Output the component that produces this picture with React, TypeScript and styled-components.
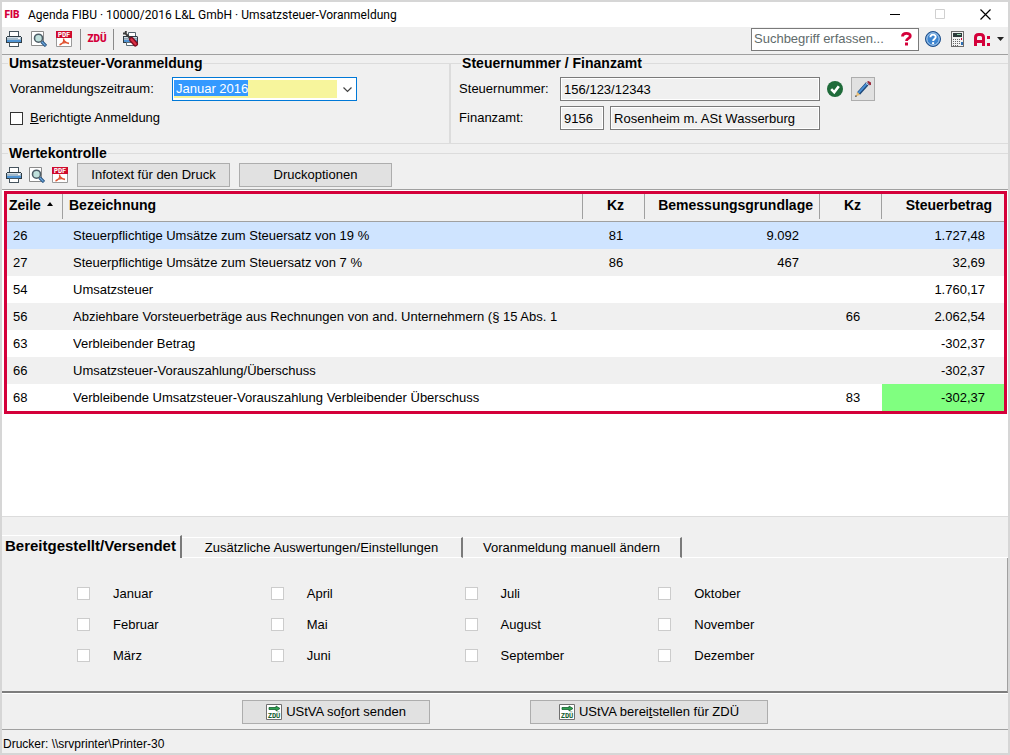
import React from "react";
import styled, { createGlobalStyle, css } from "styled-components";

const face = "#f0f0f0";
const line = "#dcdcdc";
const mid = "#a0a0a0";
const red = "#d4003a";

const GlobalStyle = createGlobalStyle`
  *, *::before, *::after { box-sizing: border-box; }
  body { margin: 0; background: ${face}; }
  body, button, input, select {
    font-family: "Liberation Sans", Arial, sans-serif;
    font-size: 13px;
    line-height: 16px;
    color: #000;
  }
`;

const Window = styled.div`
  display: flex;
  flex-direction: column;
  min-height: 100vh;
  border: 2px solid #d6d6d6;
  background: ${face};
`;

/* ---------- title bar ---------- */
const TitleBar = styled.header`
  display: flex;
  align-items: center;
  height: 25px;
  padding: 0 17px 0 2px;
  gap: 8px;
  background: #fff;
`;
const Mark = styled.span`
  display: flex;
  justify-content: center;
  width: 16px;
  font-family: Roboto, "Liberation Sans", sans-serif;
  font-size: 10px;
  font-weight: 900;
  color: ${red};
`;
const Title = styled.h1`
  flex: 1;
  margin: 0;
  font: 400 12px/16px Roboto, "Open Sans", sans-serif;
`;
const WindowButtons = styled.div`
  display: flex;
  gap: 35px;
`;
const PlainButton = styled.button`
  display: flex;
  align-items: center;
  justify-content: center;
  padding: 0;
  border: 0;
  background: none;
`;

/* ---------- toolbar ---------- */
const Toolbar = styled.div`
  display: flex;
  align-items: center;
  height: 28px;
  padding: 0 4px 3px;
  border-bottom: 1px solid ${mid};
`;
const ToolGroup = styled.div<{ $gap: number }>`
  display: flex;
  align-items: center;
  gap: ${(p) => p.$gap}px;
`;
const Separator = styled.span`
  width: 1px;
  height: 21px;
  margin: 0 8px;
  background: #8a8a8a;
`;
const SearchBox = styled.div`
  display: flex;
  align-items: center;
  width: 168px;
  height: 23px;
  margin: 0 6px 0 auto;
  padding: 0 6px 0 2px;
  border: 1px solid #7a7a7a;
  background: #fff;
`;
const SearchInput = styled.input`
  flex: 1;
  min-width: 0;
  padding: 0;
  border: 0;
  outline: 0;
  background: none;
  &::placeholder { color: #5f6b6b; opacity: 1; }
`;

/* ---------- group boxes ---------- */
const Groups = styled.div`
  display: grid;
  grid-template-columns: 25fr 31fr;
`;
const Group = styled.fieldset<{ $divider?: boolean; $open?: boolean }>`
  min-width: 0;
  margin: 0;
  padding: 5px 8px 13px;
  border: 0 solid ${line};
  border-width: 1px ${(p) => (p.$divider ? 2 : 0)}px 1px 0;
  ${(p) => p.$open && css`
    margin-top: 1px;
    padding: 1px 4px 2px;
    border-bottom: 0;
  `}
`;
const GroupTitle = styled.legend<{ $indent: number }>`
  margin-left: ${(p) => p.$indent}px;
  padding: 0 1px;
  font-size: 14px;
  font-weight: 700;
  line-height: 17px;
`;
const Rows = styled.div`
  display: flex;
  flex-direction: column;
  gap: 5px;
`;
const Row = styled.div`
  display: flex;
  align-items: center;
  height: 24px;
`;
const FieldLabel = styled.label<{ $width: number }>`
  flex: none;
  width: ${(p) => p.$width}px;
`;
const Combo = styled.div`
  position: relative;
  width: 185px;
  height: 24px;
  padding: 2px 1px;
  border: 1px solid #0078d7;
  background: #fff;
`;
const ComboSelect = styled.select`
  display: block;
  width: 100%;
  height: 18px;
  padding: 0 0 1px 2px;
  border: 0;
  outline: 0;
  appearance: none;
  color: #fff;
  background:
    linear-gradient(#3399ff, #3399ff) 0 0 / 74px 16px no-repeat,
    linear-gradient(#f7f59c, #f7f59c) 0 0 / calc(100% - 18px) 100% no-repeat,
    #fff;
  option { color: #000; }
`;
const ComboArrow = styled.svg`
  position: absolute;
  top: 9px;
  right: 4px;
  pointer-events: none;
`;
const CheckLabel = styled.label`
  display: flex;
  align-items: center;
  gap: 7px;
`;
const CheckBox = styled.input<{ $dim?: boolean }>`
  appearance: none;
  flex: none;
  width: 13px;
  height: 13px;
  margin: 0;
  border: 1px solid ${(p) => (p.$dim ? "#cccccc" : "#333")};
  background: #fff;
`;
const ReadField = styled.input<{ $width: number }>`
  width: ${(p) => p.$width}px;
  height: 24px;
  padding: 0 3px;
  border: 1px solid #7a7a7a;
  outline: 0;
  background: ${face};
  box-shadow: inset 0 0 0 1px #fff;
`;
const FieldPair = styled.div`
  display: flex;
  gap: 6px;
`;
const PushButton = styled.button<{ $width: number }>`
  display: flex;
  align-items: center;
  justify-content: center;
  gap: 4px;
  width: ${(p) => p.$width}px;
  height: 24px;
  padding: 0;
  border: 1px solid #adadad;
  background: #e1e1e1;
`;
const FieldTools = styled.div`
  display: flex;
  align-items: center;
  gap: 8px;
  margin-left: 7px;
`;
const ValueBar = styled.div`
  display: flex;
  align-items: center;
  gap: 9px;
`;

/* ---------- table ---------- */
const ListArea = styled.main`
  flex: 1;
  padding: 1px 1px 4px 2px;
  border-top: 1px solid ${mid};
  border-bottom: 1px solid ${line};
  background: #fff;
`;
const Frame = styled.div`
  border: 3px solid ${red};
`;
const Table = styled.table`
  width: 100%;
  table-layout: fixed;
  border-collapse: separate;
  border-spacing: 0;
`;
const Head = styled.th<{ $align?: string; $left?: number; $right?: number; $last?: boolean }>`
  height: 28px;
  padding: 0 0 2px;
  border-bottom: 1px solid ${mid};
  background: ${face};
  font-size: 14px;
  line-height: 23px;
  > span {
    display: block;
    height: 25px;
    padding: 0 ${(p) => p.$right ?? 6}px 0 ${(p) => p.$left ?? 6}px;
    border-right: ${(p) => (p.$last ? 0 : 1)}px solid ${mid};
    text-align: ${(p) => p.$align ?? "left"};
    white-space: nowrap;
  }
`;
const SortMark = styled.svg`
  margin-left: 6px;
  vertical-align: 4px;
`;
const BodyRow = styled.tr<{ $tone: "selected" | "odd" | "even" }>`
  background: ${(p) => ({ selected: "#cfe4ff", odd: "#f0f0f0", even: "#fff" })[p.$tone]};
`;
const Cell = styled.td<{ $align?: string; $left?: number; $right?: number; $mark?: boolean }>`
  height: 27px;
  padding: 0 ${(p) => p.$right ?? 0}px 0 ${(p) => p.$left ?? 0}px;
  text-align: ${(p) => p.$align ?? "left"};
  white-space: nowrap;
  ${(p) => p.$mark && css`background: #80ff80;`}
`;
const Clip = styled.span`
  display: block;
  overflow: hidden;
`;

/* ---------- tabs ---------- */
const TabList = styled.div`
  display: flex;
  align-items: flex-end;
  padding-top: 18px;
`;
const Tab = styled.button<{ $active?: boolean; $width: number }>`
  width: ${(p) => p.$width}px;
  height: ${(p) => (p.$active ? 23 : 21)}px;
  padding: 0;
  border: 0;
  border-top: 1px solid #fff;
  border-right: 2px solid #7a7a7a;
  background: ${face};
  ${(p) => p.$active
    ? css`
        padding: 0 0 3px 3px;
        font-size: 15px;
        font-weight: 700;
        text-align: left;
        white-space: nowrap;
      `
    : css`
        border-bottom: 1px solid #fff;
      `}
`;
const TabRest = styled.span`
  flex: 1;
  border-bottom: 1px solid #fff;
`;
const TabPanel = styled.section`
  padding: 20px 155px 20px 75px;
  border-right: 1px solid ${mid};
  border-bottom: 2px solid #7d7d7d;
`;
const Months = styled.div`
  display: grid;
  grid-template-columns: repeat(4, 1fr);
  grid-template-rows: repeat(3, 31px);
  grid-auto-flow: column;
`;
const MonthLabel = styled.label`
  display: flex;
  align-items: center;
  gap: 23px;
`;

/* ---------- footer ---------- */
const Actions = styled.div`
  display: flex;
  justify-content: center;
  gap: 100px;
  padding: 6px 0 5px;
  border-top: 1px solid #fff;
`;
const StatusBar = styled.footer`
  padding: 6px 1px 1px;
  border-top: 1px solid ${mid};
  font-size: 12px;
`;

/* ---------- icons ---------- */
const PrinterIcon = () => (
  <svg width="16" height="16" viewBox="0 0 16 16" shapeRendering="crispEdges" aria-hidden="true">
    <path d="M3 0h10v6H3z" fill="#46545e" />
    <path d="M4 1h8v4H4z" fill="#fff" />
    <path d="M1 5h14v1h1v6H0V6h1z" fill="#2f3d46" />
    <path d="M1 6h14v1H1z" fill="#d3dee6" />
    <path d="M1 7h14v2H1z" fill="#a3bacb" />
    <path d="M1 9h14v2H1z" fill="#4f94d4" />
    <path d="M12 7h2v1h-2z" fill="#fff" />
    <path d="M3 11h10v5H3z" fill="#46545e" />
    <path d="M4 12h8v3H4z" fill="#fff" />
  </svg>
);
const PreviewIcon = () => (
  <svg width="16" height="16" viewBox="0 0 16 16" aria-hidden="true">
    <path d="M.5.5h12v14H.5z" fill="#fff" stroke="#8b8b8b" />
    <path d="M10.500 10.500l4.500 4.500" stroke="#234f7d" strokeWidth="3.200" />
    <path d="M10.500 10.500l4 4" stroke="#6fa8dc" strokeWidth="1.200" />
    <circle cx="7.500" cy="7.200" r="4" fill="#bfe0dc" stroke="#4d5c66" strokeWidth="1.600" />
  </svg>
);
const PdfIcon = () => (
  <svg width="16" height="16" viewBox="0 0 16 16" aria-hidden="true">
    <path d="M.5.5h15v15H.5z" fill="#fff" stroke="#9a9a9a" />
    <path d="M0 0h16v7H0z" fill="#cf0a2c" />
    <text x="8" y="6" textAnchor="middle" fontSize="7" fontWeight="700" fontFamily="DejaVu Sans Mono, monospace" fill="#fff">PDF</text>
    <path d="M7.500 7.500c1 3-1.500 5.500-4 6.500M7.500 8c.5 2.500 3 4 5.500 4.500M4 13.500c2-1.800 5-2.200 8.500-1.500" fill="none" stroke="#e0512f" strokeWidth="1.400" />
  </svg>
);
const PrinterSetupIcon = () => (
  <svg width="18" height="16" viewBox="0 0 18 16" aria-hidden="true">
    <path d="M6.500 6V1.500h7V6" fill="#fff" stroke="#55636d" />
    <path d="M1 5h14l1 1v6H1z" fill="#2f3d46" />
    <path d="M2 6h13v1.500H2z" fill="#d3dee6" />
    <path d="M2 7.500h13V9H2z" fill="#a3bacb" />
    <path d="M2 9h13v2H2z" fill="#4f94d4" />
    <path d="M4.500 11.500h8v3h-8z" fill="#fff" stroke="#5a6a75" />
    <path d="M1 2.500h2.500L4 0M4 3l5 5" fill="none" stroke="#3c3c3c" strokeWidth="2" />
    <path d="M9.500 8.500l4 4.500" stroke="#7b0b1e" strokeWidth="5" strokeLinecap="round" />
    <path d="M9.500 8.500l4 4.500" stroke="#dc2f45" strokeWidth="2.400" strokeLinecap="round" />
  </svg>
);
const HelpIcon = () => (
  <svg width="16" height="16" viewBox="0 0 16 16" aria-hidden="true">
    <circle cx="8" cy="8" r="7.500" fill="#2b6cb4" stroke="#1f4f8a" />
    <circle cx="8" cy="8" r="6.200" fill="#3d85d0" stroke="#b9d6f2" strokeWidth="1" />
    <path d="M5.400 6.200c0-3.400 5.300-3.400 5.300-.2 0 1.900-2.600 2-2.600 4" fill="none" stroke="#fff" strokeWidth="1.900" />
    <path d="M7.100 11.200h2v1.900h-2z" fill="#fff" />
  </svg>
);
const CalculatorIcon = () => (
  <svg width="13" height="16" viewBox="0 0 13 16" shapeRendering="crispEdges" aria-hidden="true">
    <path d="M.5.5h12v15H.5z" fill="#f2f2f2" stroke="#6b6b6b" />
    <path d="M2 2h9v4H2z" fill="#2c3a3a" />
    <path d="M6 3h4v1H6z" fill="#8fd0a8" />
    {[8, 10, 12].map((y) => [2, 4, 6, 8].map((x) => <rect key={`${x}-${y}`} x={x} y={y} width="1" height="1" fill="#666" />))}
    <path d="M10 7h1v2h-1z" fill={red} />
    <path d="M10 11h2v3h-2z" fill="#2f6fb5" />
    <path d="M2 14h1v1H2zM4 14h1v1H4zM6 14h1v1H6z" fill="#666" />
  </svg>
);
const AgendaIcon = () => (
  <svg width="17" height="13" viewBox="0 0 17 13" aria-hidden="true">
    <path d="M1.500 13V4.500q0-3 3-3h2q3 0 3 3V13M1.500 8.500h8" fill="none" stroke={red} strokeWidth="3" />
    <path d="M13 3h3v3h-3zM13 10h3v3h-3z" fill={red} />
  </svg>
);
const QuestionIcon = () => (
  <svg width="11" height="14" viewBox="0 0 11 14" aria-hidden="true">
    <path d="M1.500 4.500c0-4 7.800-4 7.800-.6 0 2.600-3.800 2.300-3.800 5.100" fill="none" stroke={red} strokeWidth="2.800" />
    <path d="M4 10.500h3V13.500H4z" fill={red} />
  </svg>
);
const OkIcon = () => (
  <svg width="16" height="16" viewBox="0 0 16 16" role="img" aria-label="Gültig">
    <circle cx="8" cy="8" r="8" fill="#1f6b3a" />
    <path d="M4.200 8.200l3 3 4.600-6" fill="none" stroke="#fff" strokeWidth="2.600" />
  </svg>
);
const PencilIcon = () => (
  <svg width="16" height="16" viewBox="0 0 16 16" aria-hidden="true">
    <path d="M3.500 12.500l9-10" stroke="#1d4675" strokeWidth="4" />
    <path d="M3.300 12.200l9-10" stroke="#4a90d6" strokeWidth="2" />
    <path d="M12 .800l1.500-.8L16 1.500v1.800l-1.200 1.300z" fill="#9b2a3c" />
    <path d="M11 2l3 3" stroke="#c9ccd0" strokeWidth="1" />
    <path d="M1 15.500l1-4.500 3.200 2.700z" fill="#e9bd72" />
    <path d="M0 16l.8-2 1.300 1.200z" fill="#333" />
  </svg>
);
const SendIcon = () => (
  <svg width="16" height="16" viewBox="0 0 16 16" aria-hidden="true">
    <path d="M.5.5h15v15H.5z" fill="#fff" stroke="#6f6f6f" />
    <path d="M3 3.500h7V2l4 2.500L10 7V5.500H3z" fill="#2fa050" stroke="#14602f" strokeWidth=".8" />
    <text x="8" y="14" textAnchor="middle" fontSize="7" fontWeight="700" fontFamily="DejaVu Sans Mono, monospace" fill="#14602f">ZDÜ</text>
  </svg>
);
const RightTools = styled.div`
  display: flex;
  align-items: center;
  gap: 10px;
`;

type Line = { zeile: string; text: string; kz1?: string; basis?: string; kz2?: string; betrag: string };
const lines: Line[] = [
  { zeile: "26", text: "Steuerpflichtige Umsätze zum Steuersatz von 19 %", kz1: "81", basis: "9.092", betrag: "1.727,48" },
  { zeile: "27", text: "Steuerpflichtige Umsätze zum Steuersatz von 7 %", kz1: "86", basis: "467", betrag: "32,69" },
  { zeile: "54", text: "Umsatzsteuer", betrag: "1.760,17" },
  { zeile: "56", text: "Abziehbare Vorsteuerbeträge aus Rechnungen von and. Unternehmern (§ 15 Abs. 1", kz2: "66", betrag: "2.062,54" },
  { zeile: "63", text: "Verbleibender Betrag", betrag: "-302,37" },
  { zeile: "66", text: "Umsatzsteuer-Vorauszahlung/Überschuss", betrag: "-302,37" },
  { zeile: "68", text: "Verbleibende Umsatzsteuer-Vorauszahlung Verbleibender Überschuss", kz2: "83", betrag: "-302,37" },
];
const months = ["Januar", "Februar", "März", "April", "Mai", "Juni", "Juli", "August", "September", "Oktober", "November", "Dezember"];

export default function App() {
  return (
    <>
      <GlobalStyle />
      <Window>
        <TitleBar>
          <Mark>FIB</Mark>
          <Title>Agenda FIBU · 10000/2016 L&amp;L GmbH · Umsatzsteuer-Voranmeldung</Title>
          <WindowButtons>
            <PlainButton aria-label="Minimieren">
              <svg width="10" height="11"><path d="M0 5.500h10" stroke="#000" /></svg>
            </PlainButton>
            <PlainButton aria-label="Maximieren" disabled>
              <svg width="10" height="11"><path d="M.5.5h9v9h-9z" fill="none" stroke="#d0d0d0" /></svg>
            </PlainButton>
            <PlainButton aria-label="Schließen">
              <svg width="11" height="11"><path d="M.5.5l10 10M10.500.5l-10 10" stroke="#000" strokeWidth="1.200" /></svg>
            </PlainButton>
          </WindowButtons>
        </TitleBar>

        <Toolbar>
          <ToolGroup $gap={9}>
            <PlainButton aria-label="Drucken"><PrinterIcon /></PlainButton>
            <PlainButton aria-label="Vorschau"><PreviewIcon /></PlainButton>
            <PlainButton aria-label="PDF erstellen"><PdfIcon /></PlainButton>
          </ToolGroup>
          <Separator />
          <PlainButton><Mark>ZDÜ</Mark></PlainButton>
          <Separator />
          <PlainButton aria-label="Druckereinstellungen"><PrinterSetupIcon /></PlainButton>
          <SearchBox>
            <SearchInput type="text" aria-label="Suchbegriff" placeholder="Suchbegriff erfassen..." />
            <PlainButton aria-label="Suche"><QuestionIcon /></PlainButton>
          </SearchBox>
          <RightTools>
            <PlainButton aria-label="Hilfe"><HelpIcon /></PlainButton>
            <PlainButton aria-label="Rechner"><CalculatorIcon /></PlainButton>
            <ToolGroup $gap={6}>
              <PlainButton aria-label="Agenda"><AgendaIcon /></PlainButton>
              <PlainButton aria-label="Weitere">
                <svg width="7" height="4"><path d="M0 0h7L3.500 4z" fill="#222" /></svg>
              </PlainButton>
            </ToolGroup>
          </RightTools>
        </Toolbar>

        <Groups>
          <Group $divider>
            <GroupTitle $indent={-2}>Umsatzsteuer-Voranmeldung</GroupTitle>
            <Rows>
              <Row>
                <FieldLabel $width={162} htmlFor="zeitraum">Voranmeldungszeitraum:</FieldLabel>
                <Combo>
                  <ComboSelect id="zeitraum" defaultValue="Januar 2016">
                    {months.map((m) => <option key={m}>{m} 2016</option>)}
                  </ComboSelect>
                  <ComboArrow width="9" height="6"><path d="M.5.5l4 4 4-4" fill="none" stroke="#444" strokeWidth="1.200" /></ComboArrow>
                </Combo>
              </Row>
              <Row>
                <CheckLabel>
                  <CheckBox type="checkbox" />
                  <span><u>B</u>erichtigte Anmeldung</span>
                </CheckLabel>
              </Row>
            </Rows>
          </Group>
          <Group>
            <GroupTitle $indent={2}>Steuernummer / Finanzamt</GroupTitle>
            <Rows>
              <Row>
                <FieldLabel $width={101} htmlFor="steuernummer">Steuernummer:</FieldLabel>
                <ReadField id="steuernummer" $width={260} readOnly value="156/123/12343" />
                <FieldTools>
                  <OkIcon />
                  <PushButton $width={24} aria-label="Bearbeiten"><PencilIcon /></PushButton>
                </FieldTools>
              </Row>
              <Row>
                <FieldLabel $width={101} htmlFor="finanzamt">Finanzamt:</FieldLabel>
                <FieldPair>
                  <ReadField id="finanzamt" $width={44} readOnly value="9156" />
                  <ReadField aria-label="Name des Finanzamts" $width={210} readOnly value="Rosenheim m. ASt Wasserburg" />
                </FieldPair>
              </Row>
            </Rows>
          </Group>
        </Groups>

        <Group $open>
          <GroupTitle $indent={2}>Wertekontrolle</GroupTitle>
          <ValueBar>
            <ToolGroup $gap={7}>
              <PlainButton aria-label="Drucken"><PrinterIcon /></PlainButton>
              <PlainButton aria-label="Vorschau"><PreviewIcon /></PlainButton>
              <PlainButton aria-label="PDF erstellen"><PdfIcon /></PlainButton>
            </ToolGroup>
            <PushButton $width={153}>Infotext für den Druck</PushButton>
            <PushButton $width={153}>Druckoptionen</PushButton>
          </ValueBar>
        </Group>

        <ListArea>
          <Frame>
            <Table>
              <colgroup>
                <col width="56" />
                <col />
                <col width="62" />
                <col width="175" />
                <col width="62" />
                <col width="122" />
              </colgroup>
              <thead>
                <tr>
                  <Head $left={2} $right={2}>
                    <span>Zeile<SortMark width="6" height="4"><path d="M0 4h6L3 0z" fill="#000" /></SortMark></span>
                  </Head>
                  <Head><span>Bezeichnung</span></Head>
                  <Head $align="center" $left={10}><span>Kz</span></Head>
                  <Head $align="right"><span>Bemessungsgrundlage</span></Head>
                  <Head $align="center" $left={10}><span>Kz</span></Head>
                  <Head $align="right" $right={12} $last><span>Steuerbetrag</span></Head>
                </tr>
              </thead>
              <tbody>
                {lines.map((l, i) => (
                  <BodyRow key={l.zeile} $tone={i === 0 ? "selected" : i % 2 ? "odd" : "even"}>
                    <Cell $left={6}>{l.zeile}</Cell>
                    <Cell $left={10} $right={20}><Clip>{l.text}</Clip></Cell>
                    <Cell $align="center" $left={4}>{l.kz1}</Cell>
                    <Cell $align="right" $right={21}>{l.basis}</Cell>
                    <Cell $align="center" $left={4}>{l.kz2}</Cell>
                    <Cell $align="right" $right={19} $mark={l.zeile === "68"}>{l.betrag}</Cell>
                  </BodyRow>
                ))}
              </tbody>
            </Table>
          </Frame>
        </ListArea>

        <TabList role="tablist">
          <Tab role="tab" aria-selected="true" $active $width={180}>Bereitgestellt/Versendet</Tab>
          <Tab role="tab" aria-selected="false" $width={281}>Zusätzliche Auswertungen/Einstellungen</Tab>
          <Tab role="tab" aria-selected="false" $width={219}>Voranmeldung manuell ändern</Tab>
          <TabRest />
        </TabList>
        <TabPanel role="tabpanel">
          <Months>
            {months.map((m) => (
              <MonthLabel key={m}>
                <CheckBox type="checkbox" disabled $dim />
                {m}
              </MonthLabel>
            ))}
          </Months>
        </TabPanel>

        <Actions>
          <PushButton $width={188}><SendIcon /><span>UStVA so<u>f</u>ort senden</span></PushButton>
          <PushButton $width={238}><SendIcon /><span>UStVA berei<u>t</u>stellen für ZDÜ</span></PushButton>
        </Actions>
        <StatusBar>Drucker: \\srvprinter\Printer-30</StatusBar>
      </Window>
    </>
  );
}
